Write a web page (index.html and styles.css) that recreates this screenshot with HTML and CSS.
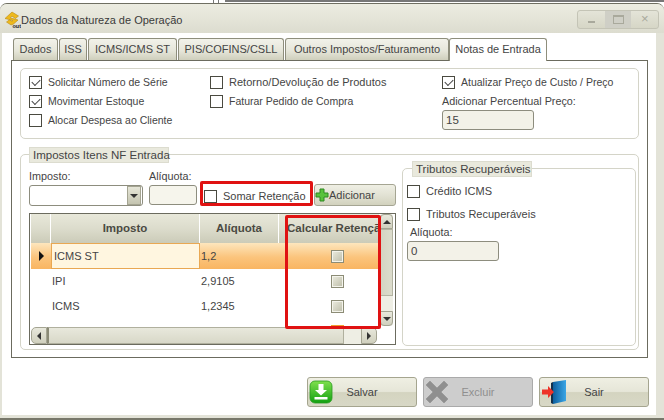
FILE: index.html
```html
<!DOCTYPE html>
<html lang="pt-BR">
<head>
<meta charset="utf-8">
<title>Dados da Natureza de Operação</title>
<link rel="stylesheet" href="styles.css">
</head>
<body>
<div class="window">
  <header class="titlebar">
    <svg class="logo" width="17" height="17" viewBox="0 0 17 17">
      <path d="M1 7.500 L8 1 L14.500 5 L11.500 7.500 L8 5.200 L6.300 6.800 L14 9 L9.500 13 L7 14 L2.500 11 L5.500 8.800 L8 10.300 L9 9.500Z" fill="#eeb91c" stroke="#b98a12" stroke-width=".6"/>
      <text x="8.500" y="16.500" class="logo-text">out</text>
    </svg>
    <span class="title">Dados da Natureza de Operação</span>
    <div class="controls">
      <span class="ctl ctl-min"><i class="min-glyph"></i></span>
      <span class="ctl ctl-max"><i class="max-glyph"></i></span>
      <span class="ctl ctl-close">×</span>
    </div>
  </header>
  <main class="client">
    <nav class="tabs">
      <span class="tab tab-dados">Dados</span>
      <span class="tab tab-iss">ISS</span>
      <span class="tab tab-icms">ICMS/ICMS ST</span>
      <span class="tab tab-pis">PIS/COFINS/CSLL</span>
      <span class="tab tab-outros">Outros Impostos/Faturamento</span>
      <span class="tab tab-active">Notas de Entrada</span>
    </nav>
    <section class="panel">
      <div class="top-group">
        <div class="col col-a">
          <label class="check"><i class="box on"></i>Solicitar Número de Série</label>
          <label class="check"><i class="box on"></i>Movimentar Estoque</label>
          <label class="check"><i class="box"></i>Alocar Despesa ao Cliente</label>
        </div>
        <div class="col col-b">
          <label class="check check-wide"><i class="box"></i>Retorno/Devolução de Produtos</label>
          <label class="check"><i class="box"></i>Faturar Pedido de Compra</label>
        </div>
        <div class="col col-c">
          <label class="check"><i class="box on"></i>Atualizar Preço de Custo / Preço</label>
          <span class="field-label">Adicionar Percentual Preço:</span>
          <span class="input input-wide">15</span>
        </div>
      </div>
      <div class="bottom-group">
        <span class="legend legend-main">Impostos Itens NF Entrada</span>
        <div class="left-side">
          <div class="form-row">
            <div class="field field-imposto">
              <span class="field-label">Imposto:</span>
              <span class="combo"><span class="combo-btn"><i class="arrow-down"></i></span></span>
            </div>
            <div class="field field-aliquota">
              <span class="field-label">Alíquota:</span>
              <span class="input input-narrow"></span>
            </div>
            <label class="check check-somar"><i class="box"></i>Somar Retenção</label>
            <button class="btn-add" type="button">
              <svg width="14" height="14" viewBox="0 0 14 14"><path d="M5 1h4v4h4v4H9v4H5V9H1V5h4z" fill="#59c23c" stroke="#2f8a22"/></svg>Adicionar
            </button>
          </div>
          <div class="grid">
            <div class="grid-view">
              <div class="grid-body">
                <div class="row head">
                  <span class="sel"></span>
                  <span class="c1">Imposto</span>
                  <span class="c2">Alíquota</span>
                  <span class="c3">Calcular Retenção</span>
                </div>
                <div class="row current">
                  <span class="sel"><i class="pointer"></i></span>
                  <span class="c1">ICMS ST</span>
                  <span class="c2">1,2</span>
                  <span class="c3"><i class="cell-box"></i></span>
                </div>
                <div class="row">
                  <span class="sel"></span>
                  <span class="c1">IPI</span>
                  <span class="c2">2,9105</span>
                  <span class="c3"><i class="cell-box"></i></span>
                </div>
                <div class="row">
                  <span class="sel"></span>
                  <span class="c1">ICMS</span>
                  <span class="c2">1,2345</span>
                  <span class="c3"><i class="cell-box"></i></span>
                </div>
                <div class="row">
                  <span class="sel"></span>
                  <span class="c1"></span>
                  <span class="c2"></span>
                  <span class="c3"><i class="cell-box hot"></i></span>
                </div>
              </div>
              <div class="vscroll">
                <span class="sb-btn sb-up"><i class="arrow-up"></i></span>
                <span class="sb-thumb-v"></span>
                <span class="sb-track-v"></span>
                <span class="sb-btn sb-down"><i class="arrow-down"></i></span>
              </div>
            </div>
            <div class="hscroll">
              <span class="sb-btn-h sb-left"><i class="arrow-left"></i></span>
              <span class="sb-thumb-h"></span>
              <span class="sb-track-h"></span>
              <span class="sb-btn-h sb-right"><i class="arrow-right"></i></span>
            </div>
          </div>
        </div>
        <aside class="tributos">
          <span class="legend legend-trib">Tributos Recuperáveis</span>
          <label class="check"><i class="box"></i>Crédito ICMS</label>
          <label class="check check-trib"><i class="box"></i>Tributos Recuperáveis</label>
          <span class="field-label label-aliq">Alíquota:</span>
          <span class="input input-wide">0</span>
        </aside>
        <div class="mark mark-somar"></div>
        <div class="mark mark-col"></div>
      </div>
    </section>
    <footer class="actions">
      <button class="btn" type="button">
        <svg class="btn-icon" width="24" height="24" viewBox="0 0 24 24">
          <defs><linearGradient id="g" x1="0" y1="0" x2="0" y2="1"><stop offset="0" stop-color="#7fe04e"/><stop offset="1" stop-color="#12a012"/></linearGradient></defs>
          <rect x="1" y="1" width="22" height="22" rx="5" fill="url(#g)" stroke="#2a9a20" stroke-width=".8"/>
          <path d="M9.500 4h5v6h3.500L12 15.500 6 10h3.500z" fill="#fff"/>
          <rect x="5.500" y="17" width="13" height="2.500" fill="#fff"/>
        </svg>
        <span>Salvar</span>
      </button>
      <button class="btn btn-off" type="button">
        <svg class="btn-icon" width="24" height="24" viewBox="0 0 24 24">
          <path d="M5 1 L12 8 L19 1 L23 5 L16 12 L23 19 L19 23 L12 16 L5 23 L1 19 L8 12 L1 5Z" fill="#8f8f8f" stroke="#9c9c9c"/>
        </svg>
        <span>Excluir</span>
      </button>
      <button class="btn btn-exit" type="button">
        <svg class="btn-icon" width="26" height="26" viewBox="0 0 26 26">
          <defs><linearGradient id="d" x1="0" y1="0" x2="1" y2="0"><stop offset="0" stop-color="#0c5f9e"/><stop offset="1" stop-color="#3ba6e6"/></linearGradient></defs>
          <path d="M12 3 L25 1 V22 L12 25Z" fill="url(#d)"/>
          <path d="M12 3 L10 4 V24 L12 25Z" fill="#12314d"/>
          <path d="M1 10.500h6V7l6 6-6 6v-3.500H1z" fill="#ee3328"/>
        </svg>
        <span>Sair</span>
      </button>
    </footer>
  </main>
</div>
</body>
</html>
```
FILE: styles.css
```css
* { box-sizing: border-box; }
html, body { margin: 0; height: 100%; }
body {
  width: 664px;
  height: 420px;
  overflow: hidden;
  padding-top: 3px;
  font: 10.500px/14px "Liberation Sans", Arial, sans-serif;
  color: #444;
  background:
    linear-gradient(#777, #777) 213px 0 / 1px 3px no-repeat,
    linear-gradient(#777, #777) 218px 0 / 1px 3px no-repeat,
    linear-gradient(#777, #777) 225px 0 / 439px 2px no-repeat,
    #fff;
}
.window {
  width: 664px;
  height: 417px;
  border-top: 1px solid #6f6f62;
  border-bottom: 2px solid #77776a;
  border-radius: 7px 7px 0 0;
  background: #e3e3d8;
  display: flex;
  flex-direction: column;
}
.titlebar {
  height: 29px;
  flex: none;
  display: flex;
  align-items: center;
  padding: 0 5px 0 4px;
  background: linear-gradient(#ecece1, #e6e6da 40%, #dcdccf);
  border-radius: 7px 7px 0 0;
}
.logo { flex: none; margin-top: 1px; }
.logo-text { font: bold 5.500px "Liberation Sans", sans-serif; fill: #222; }
.title { font-size: 11px; color: #3a3a3a; margin-top: 2px; }
.controls {
  margin-left: auto;
  display: flex;
  width: 82px;
  height: 19px;
  border: 1px solid #c4c4b6;
  border-radius: 3px;
  background: linear-gradient(#e4e4d8, #d6d6c6);
  margin-top: 1px;
}
.ctl { flex: 1; display: flex; align-items: center; justify-content: center; color: #a9a99c; font-size: 13px; }
.ctl-max { background: #cfcfc6; }
.min-glyph { width: 7px; height: 2px; background: #a9a99c; margin-top: 6px; }
.max-glyph { width: 11px; height: 9px; border: 1px solid #a9a99c; border-top-width: 2px; }

.client {
  flex: 1;
  margin: 0 8px 3px 2px;
  background: #fff;
  padding: 5px 0 0 0;
  display: flex;
  flex-direction: column;
  min-height: 0;
}
.tabs {
  display: flex;
  height: 22px;
  padding-left: 11px;
  flex: none;
  font-size: 11px;
}
.tab {
  height: 22px;
  line-height: 21px;
  text-align: center;
  white-space: nowrap;
  border: 1px solid #8e8e7c;
  border-bottom: 0;
  border-radius: 3px 3px 0 0;
  background: linear-gradient(#f2f2ea, #e6e6da 55%, #cfcfbc);
  margin-right: 1px;
}
.tab-dados { width: 45px; }
.tab-iss { width: 28px; }
.tab-icms { width: 89px; }
.tab-pis { width: 106px; }
.tab-outros { width: 164px; margin-right: 0; }
.tab-active { width: 98px; background: #fff; margin-right: 0; position: relative; z-index: 1; height: 23px; }

.panel {
  width: 637px;
  height: 298px;
  margin-left: 9px;
  border: 1px solid #6b6b5e;
  background: #fff;
  padding: 7px 8px 0 8px;
  flex: none;
}
.top-group {
  height: 71px;
  border: 1px solid #d4d4c8;
  border-radius: 5px;
  display: flex;
  padding: 6px 0 0 8px;
}
.col { display: flex; flex-direction: column; }
.col-a { width: 181px; }
.col-b { width: 232px; }
.col-c { width: 190px; }
.check { display: flex; align-items: center; height: 14px; white-space: nowrap; margin-bottom: 5px; }
.check-wide { letter-spacing: .03px; font-size: 11px; }
.box {
  flex: none;
  width: 13px;
  height: 13px;
  border: 1px solid #4a4a40;
  background: #fff;
  margin-right: 6px;
  position: relative;
}
.box.on::after {
  content: "";
  position: absolute;
  left: 2px;
  top: 0;
  width: 7px;
  height: 4px;
  margin: 2px 0 0 0;
  border-left: 1.500px solid #444;
  border-bottom: 1.500px solid #444;
  transform: rotate(-45deg);
}
.field-label { display: block; line-height: 14px; white-space: nowrap; font-size: 10.800px; }
.input {
  display: block;
  height: 20px;
  line-height: 18px;
  padding-left: 3px;
  border: 1px solid #8d8d7e;
  border-radius: 3px;
  background: #f3f2e8;
  font-size: 11.500px;
}
.input-wide { width: 92px; }
.col-c .field-label { margin-bottom: 2px; }

.bottom-group {
  position: relative;
  height: 196px;
  margin-top: 15px;
  border: 1px solid #d4d4c8;
  border-radius: 5px;
  display: flex;
  padding: 15px 0 0 8px;
}
.legend {
  position: absolute;
  height: 16px;
  line-height: 15px;
  background: #e9e9dd;
  border: 1px solid #dcdccf;
  padding: 0 3px;
  white-space: nowrap;
  font-size: 11.500px;
}
.legend-main { left: 8px; top: -8px; width: 140px; }
.left-side { width: 367px; flex: none; }
.form-row { display: flex; height: 36px; align-items: flex-end; }
.field-imposto { width: 120px; }
.field-aliquota { width: 55px; margin-bottom: 1px; }
.field .field-label { margin-bottom: 2px; }
.combo {
  display: flex;
  justify-content: flex-end;
  align-items: center;
  width: 114px;
  height: 21px;
  border: 1px solid #8d8d7e;
  border-radius: 3px;
  background: #fff;
  padding-right: 1px;
}
.combo-btn {
  width: 14px;
  height: 19px;
  background: linear-gradient(#e6e6d8, #c4c4b0);
  border: 1px solid #a4a492;
  display: flex;
  align-items: center;
  justify-content: center;
}
.arrow-down { width: 0; height: 0; border: 4px solid transparent; border-top: 4px solid #333; border-bottom: 0; }
.arrow-up { width: 0; height: 0; border: 4px solid transparent; border-bottom: 4px solid #333; border-top: 0; }
.arrow-left { width: 0; height: 0; border: 4px solid transparent; border-right: 4px solid #333; border-left: 0; }
.arrow-right { width: 0; height: 0; border: 4px solid transparent; border-left: 4px solid #333; border-right: 0; }
.input-narrow { width: 48px; background: #f6f5ec; }
.check-somar { width: 110px; margin: 0 0 3px 0; font-size: 11px; }
.btn-add {
  width: 82px;
  height: 22px;
  padding: 0;
  font: 11px "Liberation Sans", sans-serif;
  color: #444;
  display: flex;
  align-items: center;
  border: 1px solid #a5a593;
  border-radius: 3px;
  background: linear-gradient(#efefe4, #e2e2d4 50%, #d2d2be);
}
.grid {
  width: 367px;
  height: 132px;
  margin-top: 7px;
  border: 1px solid #6b6b5e;
  padding: 0 2px 1px 1px;
}
.grid-view { display: flex; height: 113px; }
.grid-body { width: 349px; height: 112px; overflow: hidden; }
.row {
  display: grid;
  grid-template-columns: 20px 149px 79px 101px;
  height: 25px;
  line-height: 25px;
  font-size: 11px;
}
.row > span { overflow: hidden; white-space: nowrap; }
.head { height: 29px; line-height: 29px; font-weight: bold; font-size: 11.500px; color: #4a4a42; }
.head > span {
  background: linear-gradient(#e8e8da, #dcdccc 50%, #cbcbb8);
  border-right: 1px solid #fff;
  text-align: center;
}
.row .c1 { padding-left: 1px; }
.head .c1 { padding-left: 0; }
.row .c2 { padding-left: 1px; }
.head .c2 { padding-left: 0; }
.row .c3 { display: flex; align-items: center; justify-content: center; padding-left: 15px; }
.head .c3 { display: block; text-align: left; padding-left: 8px; }
.current { height: 26px; line-height: 26px; background: linear-gradient(#fde6bd, #fbc47c 55%, #f9b562); }
.current .sel { display: flex; align-items: center; justify-content: center; }
.current .c1 { background: #fff6e0; border: 1px solid #e9a853; line-height: 24px; padding-left: 2px; }
.pointer { width: 0; height: 0; border: 5px solid transparent; border-left: 5px solid #111; border-right: 0; }
.cell-box {
  display: block;
  width: 13px;
  height: 13px;
  border: 1px solid #8c8c76;
  box-shadow: inset 0 0 0 1px #f4f4ec;
  background: linear-gradient(135deg, #ececdf, #bcbca8);
}
.cell-box.hot { border-color: #f0a030; }
.vscroll {
  width: 13px;
  height: 112px;
  display: flex;
  flex-direction: column;
  border-radius: 3px;
  background: #e6e6da;
}
.sb-btn { height: 15px; flex: none; display: flex; align-items: center; justify-content: center; background: linear-gradient(#e8e8dc, #d0d0be); border: 1px solid #a4a492; }
.sb-up { border-radius: 4px 4px 0 0; }
.sb-down { border-radius: 0 0 4px 4px; }
.sb-thumb-v { height: 67px; flex: none; background: linear-gradient(90deg, #d4d4c2, #dcdccc); border: 1px solid #b4b4a2; }
.sb-track-v { flex: 1; background: #eeeee4; }
.hscroll {
  display: flex;
  width: 346px;
  height: 17px;
}
.sb-btn-h { width: 16px; flex: none; display: flex; align-items: center; justify-content: center; background: linear-gradient(#e8e8dc, #d0d0be); border: 1px solid #a4a492; }
.sb-left { border-radius: 5px 0 0 5px; }
.sb-right { border-radius: 0 5px 5px 0; }
.sb-thumb-h { width: 297px; flex: none; background: linear-gradient(#e8e8dc, #d8d8c8); border: 1px solid #b0b09e; border-left: 2px solid #8a8a76; }
.sb-track-h { flex: 1; background: #eeeee4; }

.tributos {
  position: relative;
  width: 234px;
  height: 178px;
  margin: -2px 0 0 6px;
  border: 1px solid #d4d4c8;
  border-radius: 5px;
  padding: 15px 0 0 4px;
}
.legend-trib { left: 9px; top: -8px; width: 120px; }
.tributos .check { font-size: 11px; margin-bottom: 9px; }
.tributos .check-trib { margin-bottom: 4px; }
.label-aliq { margin: 0 0 2px 3px; }

.mark {
  position: absolute;
  border: 3px solid #e01212;
  border-radius: 2px;
  pointer-events: none;
}
.mark-somar { left: 179px; top: 26px; width: 113px; height: 25px; }
.mark-col { left: 264px; top: 60px; width: 96px; height: 114px; }

.actions {
  display: flex;
  justify-content: flex-end;
  gap: 6px;
  padding: 19px 7px 0 0;
}
.btn {
  width: 110px;
  height: 30px;
  padding: 0 0 0 1px;
  display: flex;
  align-items: center;
  font: 11px "Liberation Sans", sans-serif;
  color: #444;
  border: 1px solid #a5a58f;
  border-radius: 3px;
  background: linear-gradient(#efefe3, #e6e6d8 48%, #d4d4c0 52%, #d8d8c6);
}
.btn span { flex: 1; text-align: center; padding-right: 25px; }
.btn-exit span { padding-right: 27px; }
.btn-icon { flex: none; }
.btn-off { background: #cdcdcd; border-color: #aaa; color: #8f8f8f; }
```
